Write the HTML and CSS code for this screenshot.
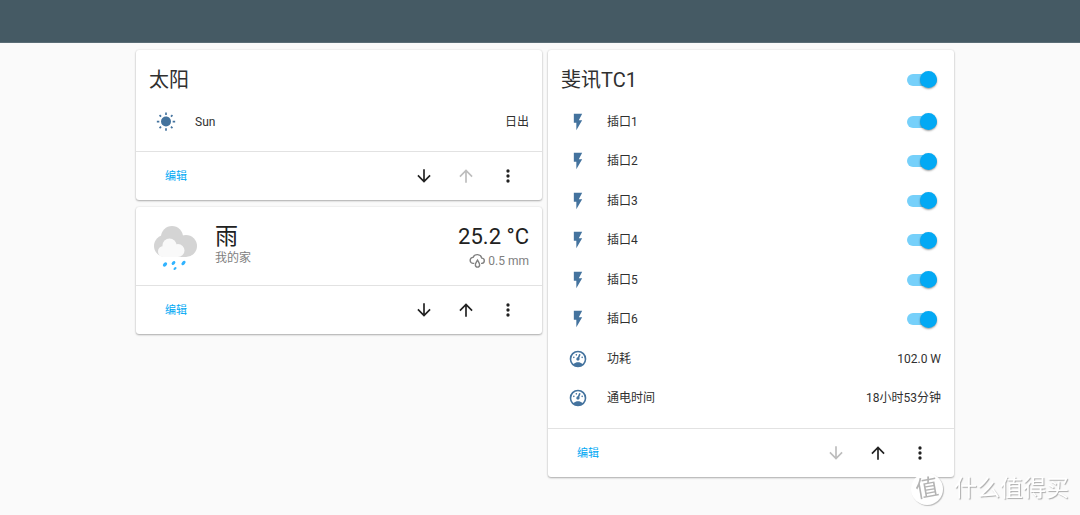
FILE: index.html
```html
<!DOCTYPE html>
<html lang="zh-CN">
<head>
<meta charset="utf-8">
<meta name="viewport" content="width=device-width, initial-scale=1">
<title>家庭面板</title>
<link rel="stylesheet" href="styles.css">
</head>
<body>
<svg class="defs" aria-hidden="true">
  <symbol id="sunny" viewBox="0 0 24 24"><path d="M3.55,18.54L4.96,19.95L6.76,18.16L5.34,16.74M11,22.45H13V19.5H11M12,5.5A6,6 0 0,0 6,11.5A6,6 0 0,0 12,17.5A6,6 0 0,0 18,11.5C18,8.18 15.31,5.5 12,5.5M20,12.5H23V10.5H20M17.24,18.16L19.04,19.95L20.45,18.54L18.66,16.74M20.45,4.46L19.04,3.05L17.24,4.84L18.66,6.26M13,0.55H11V3.5H13M4,10.5H1V12.5H4M6.76,4.84L4.96,3.05L3.55,4.46L5.34,6.26L6.76,4.84Z"/></symbol>
  <symbol id="flash" viewBox="0 0 24 24"><path d="M7,2V13H10V22L17,10H13L17,2H7Z"/></symbol>
  <symbol id="gauge" viewBox="0 0 24 24"><path d="M12,2A10,10 0 0,0 2,12A10,10 0 0,0 12,22A10,10 0 0,0 22,12A10,10 0 0,0 12,2M12,4A8,8 0 0,1 20,12C20,14.4 19,16.5 17.3,18C15.9,16.7 14,16 12,16C10,16 8.2,16.7 6.7,18C5,16.5 4,14.4 4,12A8,8 0 0,1 12,4M14,5.89C13.62,5.9 13.26,6.15 13.1,6.54L11.81,9.77L11.71,10C11,10.13 10.41,10.6 10.14,11.26C9.73,12.29 10.23,13.45 11.26,13.86C12.29,14.27 13.45,13.77 13.86,12.74C14.12,12.08 14,11.32 13.57,10.76L13.67,10.5L14.96,7.29L14.97,7.26C15.17,6.75 14.92,6.17 14.41,5.96C14.28,5.91 14.15,5.89 14,5.89M10,6A1,1 0 0,0 9,7A1,1 0 0,0 10,8A1,1 0 0,0 11,7A1,1 0 0,0 10,6M7,9A1,1 0 0,0 6,10A1,1 0 0,0 7,11A1,1 0 0,0 8,10A1,1 0 0,0 7,9M17,9A1,1 0 0,0 16,10A1,1 0 0,0 17,11A1,1 0 0,0 18,10A1,1 0 0,0 17,9Z"/></symbol>
  <symbol id="down" viewBox="0 0 24 24"><path d="M20,12L18.59,10.59L13,16.17V4H11V16.17L5.41,10.59L4,12L12,20L20,12Z"/></symbol>
  <symbol id="up" viewBox="0 0 24 24"><path d="M4,12L5.41,13.41L11,7.83V20H13V7.83L18.59,13.41L20,12L12,4L4,12Z"/></symbol>
  <symbol id="dots" viewBox="0 0 24 24"><path d="M12,16A2,2 0 1,1 12,20A2,2 0 1,1 12,16M12,10A2,2 0 1,1 12,14A2,2 0 1,1 12,10M12,4A2,2 0 1,1 12,8A2,2 0 1,1 12,4Z"/></symbol>
</svg>

<header class="app-bar"></header>

<main class="board">
  <div class="column">
    <section class="card">
      <div class="card-body">
        <div class="card-head"><h2>太阳</h2></div>
        <div class="row">
          <svg class="row-icon"><use href="#sunny"/></svg>
          <span class="row-name">Sun</span>
          <span>日出</span>
        </div>
      </div>
      <div class="actions">
        <button class="edit" type="button">编辑</button>
        <div class="tools">
          <button type="button" aria-label="下移"><svg><use href="#down"/></svg></button>
          <button type="button" aria-label="上移" disabled><svg><use href="#up"/></svg></button>
          <button type="button" aria-label="更多"><svg><use href="#dots"/></svg></button>
        </div>
      </div>
    </section>

    <section class="card">
      <div class="weather">
        <svg class="weather-icon" viewBox="0 0 50 50" aria-hidden="true">
          <g fill="#d4d4d4"><circle cx="13" cy="24" r="11"/><circle cx="20" cy="15" r="11"/><circle cx="34" cy="24" r="11"/><path d="M13 16H34V35H13Z"/></g>
          <g fill="#f9f9f9"><circle cx="11.500" cy="29.500" r="5.500"/><circle cx="17.500" cy="23.500" r="7"/><circle cx="26" cy="28.500" r="6.500"/><path d="M11.500 25H26V35H11.500Z"/></g>
          <g fill="#30b3ff"><ellipse cx="13" cy="42.500" rx="2.500" ry="1.700" transform="rotate(-45 13 42.500)"/><ellipse cx="21.500" cy="41" rx="2.300" ry="1.500" transform="rotate(-50 21.500 41)"/><ellipse cx="23" cy="46.500" rx="1.800" ry="1.200" transform="rotate(-45 23 46.500)"/><ellipse cx="31.500" cy="41" rx="2.600" ry="1.600" transform="rotate(-50 31.500 41)"/></g>
        </svg>
        <div class="weather-name">
          <div class="large">雨</div>
          <div class="minor">我的家</div>
        </div>
        <div class="weather-data">
          <div class="large">25.2 °C</div>
          <div class="minor rain">
            <svg class="rain-icon" viewBox="0 0 24 24" aria-hidden="true"><path d="M7.500 16H6A4.200 4.200 0 0 1 5.700 7.600A6.500 6.500 0 0 1 18 8.700H18.500A3.700 3.700 0 0 1 18.500 16H17M12 11.500C10.600 14 9 16.100 9 18.300A3 3 0 0 0 15 18.300C15 16.100 13.400 14 12 11.500Z"/></svg>
            <span>0.5 mm</span>
          </div>
        </div>
      </div>
      <div class="actions">
        <button class="edit" type="button">编辑</button>
        <div class="tools">
          <button type="button" aria-label="下移"><svg><use href="#down"/></svg></button>
          <button type="button" aria-label="上移"><svg><use href="#up"/></svg></button>
          <button type="button" aria-label="更多"><svg><use href="#dots"/></svg></button>
        </div>
      </div>
    </section>
  </div>

  <div class="column">
    <section class="card">
      <div class="card-body">
        <div class="card-head"><h2><label for="all">斐讯TC1</label></h2><input class="switch" id="all" type="checkbox" checked></div>
        <div class="rows">
          <div class="row"><svg class="row-icon"><use href="#flash"/></svg><label class="row-name" for="s1">插口1</label><input class="switch" id="s1" type="checkbox" checked></div>
          <div class="row"><svg class="row-icon"><use href="#flash"/></svg><label class="row-name" for="s2">插口2</label><input class="switch" id="s2" type="checkbox" checked></div>
          <div class="row"><svg class="row-icon"><use href="#flash"/></svg><label class="row-name" for="s3">插口3</label><input class="switch" id="s3" type="checkbox" checked></div>
          <div class="row"><svg class="row-icon"><use href="#flash"/></svg><label class="row-name" for="s4">插口4</label><input class="switch" id="s4" type="checkbox" checked></div>
          <div class="row"><svg class="row-icon"><use href="#flash"/></svg><label class="row-name" for="s5">插口5</label><input class="switch" id="s5" type="checkbox" checked></div>
          <div class="row"><svg class="row-icon"><use href="#flash"/></svg><label class="row-name" for="s6">插口6</label><input class="switch" id="s6" type="checkbox" checked></div>
          <div class="row"><svg class="row-icon"><use href="#gauge"/></svg><span class="row-name">功耗</span><span>102.0 W</span></div>
          <div class="row"><svg class="row-icon"><use href="#gauge"/></svg><span class="row-name">通电时间</span><span>18小时53分钟</span></div>
        </div>
      </div>
      <div class="actions">
        <button class="edit" type="button">编辑</button>
        <div class="tools">
          <button type="button" aria-label="下移" disabled><svg><use href="#down"/></svg></button>
          <button type="button" aria-label="上移"><svg><use href="#up"/></svg></button>
          <button type="button" aria-label="更多"><svg><use href="#dots"/></svg></button>
        </div>
      </div>
    </section>
  </div>
</main>

<div class="watermark"><span class="seal"><span class="seal-char">值</span></span><span>什么值得买</span></div>
</body>
</html>
```
FILE: styles.css
```css
* {
  box-sizing: border-box;
}

body {
  margin: 0;
  background: #fafafa;
  color: #303030;
  font: 12px/16px Roboto, "Noto Sans CJK SC", sans-serif;
}

.defs {
  display: none;
}

svg {
  display: block;
  fill: currentColor;
}

.app-bar {
  height: 43px;
  background: #455a64;
  border-bottom: 1px solid #5a6d76;
}

.board {
  display: flex;
  align-items: flex-start;
  gap: 6px;
  max-width: 828px;
  margin: 0 auto;
  padding: 7px 0 7px 10px;
}

.column {
  flex: 1;
  display: flex;
  flex-direction: column;
  gap: 7px;
}

.card {
  background: #fff;
  border-radius: 3px;
  box-shadow: 0 1px 2px rgba(0, 0, 0, 0.3), 0 0 2px rgba(0, 0, 0, 0.1);
}

.card-body {
  padding: 13px;
}

.card-head {
  display: flex;
  align-items: center;
  justify-content: space-between;
  height: 33px;
  margin-bottom: 9px;
}

h2 {
  margin: 0;
  font-size: 20px;
  font-weight: 400;
  line-height: 32px;
}

.rows {
  display: flex;
  flex-direction: column;
  justify-content: space-between;
  min-height: 310px;
}

.row {
  display: flex;
  align-items: center;
  min-height: 33px;
}

.row-icon {
  width: 20px;
  height: 20px;
  margin: 0 19px 0 7px;
  color: #44739e;
}

.row-name {
  flex: 1;
}

.switch {
  appearance: none;
  display: grid;
  align-items: center;
  width: 30px;
  height: 17px;
  margin: 0 4px 0 0;
  cursor: pointer;
}

.switch::before,
.switch::after {
  content: "";
  grid-area: 1 / 1;
}

.switch::before {
  height: 12px;
  border-radius: 6px;
  background: #76d0fa;
}

.switch::after {
  justify-self: end;
  width: 17px;
  height: 17px;
  border-radius: 50%;
  background: #03a9f4;
  box-shadow: 0 1px 2px rgba(0, 0, 0, 0.4);
}

.switch:not(:checked) {
  filter: grayscale(1);
}

.switch:not(:checked)::after {
  justify-self: start;
}

.actions {
  display: flex;
  align-items: center;
  justify-content: space-between;
  height: 49px;
  padding: 0 24px 0 29px;
  border-top: 1px solid #e2e2e2;
}

button {
  padding: 0;
  border: 0;
  background: none;
  color: #212121;
  font: inherit;
  cursor: pointer;
}

button:disabled {
  color: #bdbdbd;
}

.edit {
  padding-top: 2px;
  color: #03a9f4;
  font-size: 11px;
}

.tools {
  display: flex;
  gap: 22px;
}

.tools svg {
  width: 20px;
  height: 20px;
}

.weather {
  display: flex;
  align-items: flex-start;
  min-height: 78px;
  padding: 15px 13px 13px;
}

.weather-icon {
  width: 50px;
  height: 50px;
  margin: 0 13px 0 3px;
}

.weather-name {
  flex: 1;
}

.large {
  color: #212121;
  font-size: 23px;
  line-height: 30px;
}

.minor {
  color: #808080;
  line-height: 12px;
}

.weather-data {
  text-align: right;
}

.weather-data .large {
  font-size: 22px;
}

.rain {
  display: flex;
  align-items: center;
  justify-content: flex-end;
  gap: 2px;
  line-height: 16px;
}

.rain-icon {
  width: 17px;
  height: 17px;
  fill: none;
  stroke: currentColor;
  stroke-width: 2;
}

.watermark {
  position: fixed;
  right: 11px;
  bottom: 10px;
  display: flex;
  align-items: center;
  gap: 11px;
  color: #fff;
  font-size: 23px;
  line-height: 32px;
  text-shadow: 1px 1px 1px #aaa;
}

.seal {
  width: 32px;
  height: 32px;
  border-radius: 50%;
  background: #fff;
  box-shadow: 1px 1px 1px #bbb;
  color: #b4b4b4;
  text-align: center;
  text-shadow: none;
}

.seal-char {
  display: block;
  transform: rotate(-10deg);
}
```
